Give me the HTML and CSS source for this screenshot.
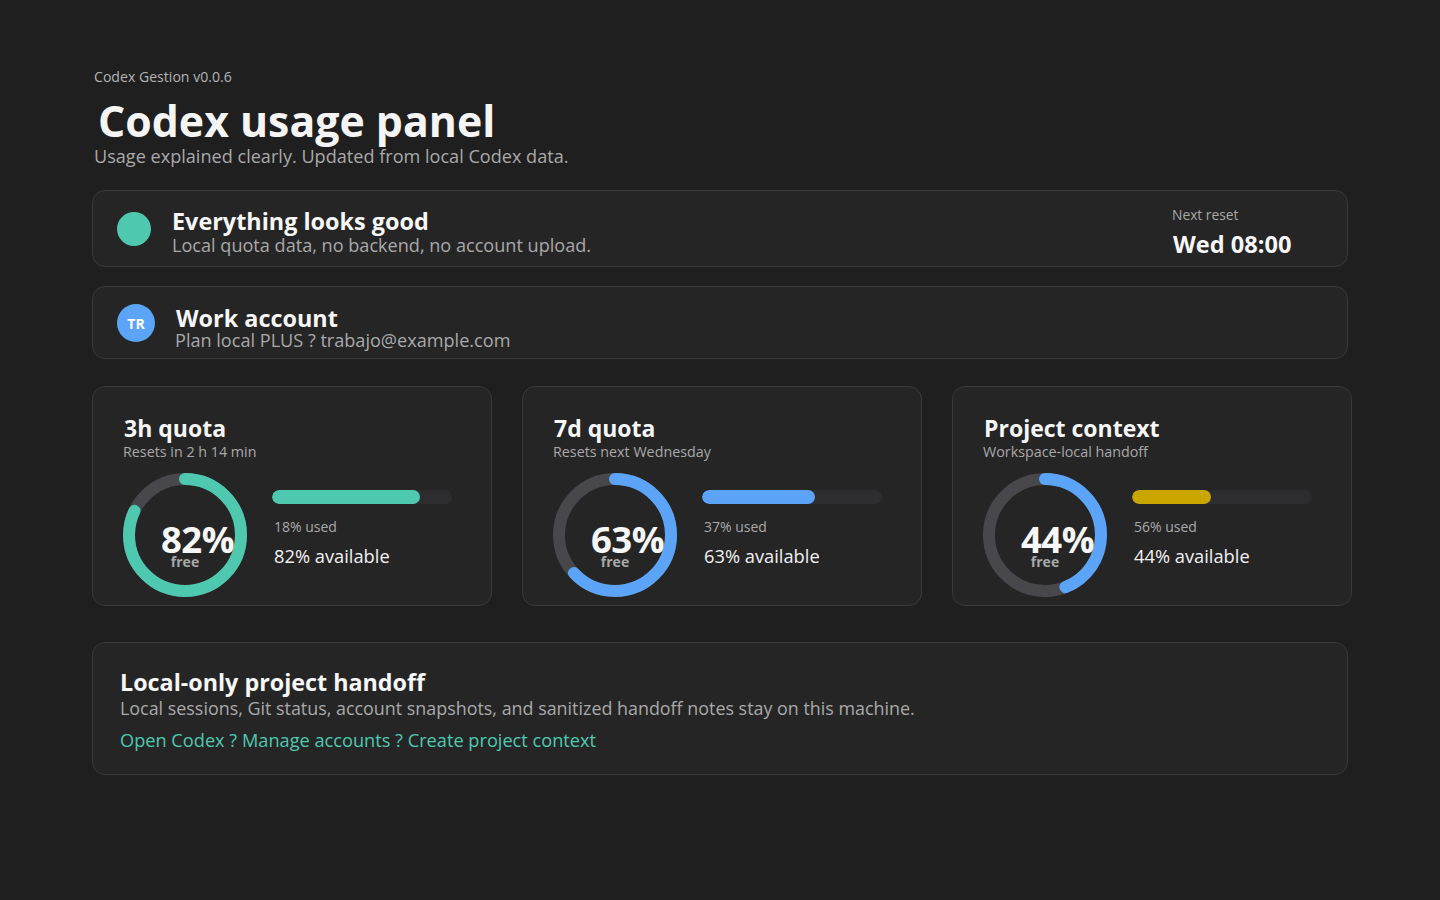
FILE: index.html
```html
<!DOCTYPE html>
<html lang="en">
<head>
<meta charset="utf-8">
<title>Codex usage panel</title>
<link rel="stylesheet" href="styles.css">
</head>
<body>
<main class="page">
  <div class="eyebrow">Codex Gestion v0.0.6</div>
  <h1 class="title">Codex usage panel</h1>
  <p class="subtitle">Usage explained clearly. Updated from local Codex data.</p>

  <section class="card status">
    <div class="dot"></div>
    <div class="status-text">
      <div class="card-title">Everything looks good</div>
      <div class="card-sub">Local quota data, no backend, no account upload.</div>
    </div>
    <div class="reset">
      <div class="reset-label">Next reset</div>
      <div class="reset-value">Wed 08:00</div>
    </div>
  </section>

  <section class="card account">
    <div class="avatar">TR</div>
    <div class="account-text">
      <div class="card-title">Work account</div>
      <div class="card-sub">Plan local PLUS ? trabajo@example.com</div>
    </div>
  </section>

  <section class="grid">
    <article class="card quota">
      <div class="q-title">3h quota</div>
      <div class="q-sub">Resets in 2 h 14 min</div>
      <div class="q-body">
        <div class="ring">
          <svg width="124" height="124" viewBox="0 0 124 124">
            <circle class="ring-track" cx="62" cy="62" r="56"/>
            <circle class="ring-arc teal" cx="62" cy="62" r="56" stroke-dasharray="288.5 351.9" transform="rotate(-90 62 62)"/>
          </svg>
          <div class="ring-label"><span class="ring-num">82%</span><span class="ring-free">free</span></div>
        </div>
        <div class="q-info">
          <div class="bar"><div class="bar-fill teal-bg" style="width:82%"></div></div>
          <div class="q-used">18% used</div>
          <div class="q-avail">82% available</div>
        </div>
      </div>
    </article>

    <article class="card quota">
      <div class="q-title">7d quota</div>
      <div class="q-sub">Resets next Wednesday</div>
      <div class="q-body">
        <div class="ring">
          <svg width="124" height="124" viewBox="0 0 124 124">
            <circle class="ring-track" cx="62" cy="62" r="56"/>
            <circle class="ring-arc blue" cx="62" cy="62" r="56" stroke-dasharray="221.7 351.9" transform="rotate(-90 62 62)"/>
          </svg>
          <div class="ring-label"><span class="ring-num">63%</span><span class="ring-free">free</span></div>
        </div>
        <div class="q-info">
          <div class="bar"><div class="bar-fill blue-bg" style="width:63%"></div></div>
          <div class="q-used">37% used</div>
          <div class="q-avail">63% available</div>
        </div>
      </div>
    </article>

    <article class="card quota">
      <div class="q-title">Project context</div>
      <div class="q-sub">Workspace-local handoff</div>
      <div class="q-body">
        <div class="ring">
          <svg width="124" height="124" viewBox="0 0 124 124">
            <circle class="ring-track" cx="62" cy="62" r="56"/>
            <circle class="ring-arc blue" cx="62" cy="62" r="56" stroke-dasharray="154.8 351.9" transform="rotate(-90 62 62)"/>
          </svg>
          <div class="ring-label"><span class="ring-num">44%</span><span class="ring-free">free</span></div>
        </div>
        <div class="q-info">
          <div class="bar"><div class="bar-fill yellow-bg" style="width:44%"></div></div>
          <div class="q-used">56% used</div>
          <div class="q-avail">44% available</div>
        </div>
      </div>
    </article>
  </section>

  <section class="card handoff">
    <div class="h-title">Local-only project handoff</div>
    <div class="h-desc">Local sessions, Git status, account snapshots, and sanitized handoff notes stay on this machine.</div>
    <div class="h-links">Open Codex ? Manage accounts ? Create project context</div>
  </section>
</main>
</body>
</html>
```

FILE: styles.css
```css
* { box-sizing: border-box; }
html, body { margin: 0; padding: 0; }
body {
  background: #1f1f1f;
  color: #f2f2f2;
  font-family: "Open Sans", "Noto Sans", sans-serif;
  width: 1440px;
  height: 900px;
  overflow: hidden;
}
.page {
  padding: 66px 92px 0 92px;
  width: 1440px;
}
.eyebrow {
  margin: 1px 0 0 2px;
  font-size: 14.1px;
  line-height: 20px;
  color: #b4b4b4;
}
.title {
  margin: 10px 0 0 6px;
  font-size: 42.8px;
  line-height: 48px;
  font-weight: 700;
  color: #f5f5f5;
}
.subtitle {
  margin: 0 0 0 2px;
  font-size: 18.1px;
  line-height: 22px;
  color: #a9a9a9;
}
.card {
  background: #252526;
  border: 1px solid #3a3a3c;
  border-radius: 13px;
}
.status {
  margin-top: 23px;
  height: 77px;
  display: flex;
  align-items: center;
  padding: 0 24px;
}
.dot {
  width: 34px;
  height: 34px;
  border-radius: 50%;
  background: #4ec9b0;
  flex: none;
}
.status-text {
  margin-left: 21px;
  padding-top: 6px;
  flex: 1;
}
.card-title {
  font-size: 23.4px;
  line-height: 26px;
  font-weight: 700;
  color: #f7f7f7;
}
.card-sub {
  font-size: 18.1px;
  line-height: 22px;
  color: #a9a9a9;
}
.reset {
  margin-right: 27px;
  width: 124px;
  padding-top: 6px;
}
.reset-label {
  font-size: 13.8px;
  line-height: 18px;
  color: #a9a9a9;
}
.reset-value {
  margin-top: 6px;
  margin-left: 1px;
  font-size: 23.6px;
  line-height: 28px;
  font-weight: 700;
  color: #f7f7f7;
}
.account {
  margin-top: 19px;
  height: 73px;
  display: flex;
  align-items: center;
  padding: 0 24px;
}
.avatar {
  width: 38px;
  height: 38px;
  border-radius: 50%;
  background: #5ba4f7;
  color: #ffffff;
  font-size: 14px;
  font-weight: 700;
  display: flex;
  align-items: center;
  justify-content: center;
  padding-top: 2px;
  flex: none;
}
.account-text {
  margin-left: 20px;
  padding-top: 10px;
}
.account .card-title { margin-left: 1px; }
.account .card-sub { margin-top: -2px; }
.grid {
  margin-top: 27px;
  display: grid;
  grid-template-columns: 400px 400px 400px;
  gap: 30px;
}
.quota {
  height: 220px;
  padding: 27px 30px 0 30px;
}
.q-title {
  font-size: 23px;
  line-height: 28px;
  font-weight: 700;
  color: #f7f7f7;
  margin-left: 1px;
}
.q-sub {
  font-size: 14.3px;
  line-height: 20px;
  color: #a9a9a9;
}
.q-body {
  margin-top: 11px;
  display: flex;
  align-items: flex-start;
}
.ring {
  position: relative;
  width: 124px;
  height: 124px;
  flex: none;
}
.ring svg { display: block; }
.ring-track {
  fill: none;
  stroke: #48484c;
  stroke-width: 12;
}
.ring-arc {
  fill: none;
  stroke-width: 12;
  stroke-linecap: round;
}
.ring-arc.teal { stroke: #4ec9b0; }
.ring-arc.blue { stroke: #5ba4f7; }
.ring-label {
  position: absolute;
  inset: 0;
  display: flex;
  flex-direction: column;
  align-items: center;
  justify-content: flex-start;
  padding-top: 52px;
}
.ring-num {
  font-size: 36.5px;
  line-height: 28px;
  font-weight: 700;
  color: #f7f7f7;
  margin-left: 25px;
  letter-spacing: -0.5px;
}
.ring-free {
  margin-top: 2px;
  font-size: 14px;
  line-height: 14px;
  font-weight: 700;
  color: #a9a9a9;
}
.q-info {
  margin-left: 25px;
  padding-top: 17px;
  width: 180px;
}
.bar {
  height: 14px;
  border-radius: 7px;
  background: #2d2d30;
  overflow: hidden;
}
.bar-fill {
  height: 100%;
  border-radius: 7px;
}
.teal-bg { background: #4ec9b0; }
.blue-bg { background: #5ba4f7; }
.yellow-bg { background: #c9a600; }
.q-used {
  margin-top: 13px;
  margin-left: 2px;
  font-size: 14px;
  line-height: 20px;
  color: #a9a9a9;
}
.q-avail {
  margin-top: 7px;
  margin-left: 2px;
  font-size: 18.3px;
  line-height: 24px;
  color: #f2f2f2;
}
.handoff {
  margin-top: 36px;
  height: 133px;
  padding: 25px 27px 0 27px;
}
.h-title {
  font-size: 23.3px;
  line-height: 28px;
  font-weight: 700;
  color: #f7f7f7;
}
.h-desc {
  font-size: 17.9px;
  line-height: 24px;
  color: #a9a9a9;
}
.h-links {
  margin-top: 8px;
  font-size: 18.2px;
  line-height: 24px;
  color: #4ec9b0;
}
```
